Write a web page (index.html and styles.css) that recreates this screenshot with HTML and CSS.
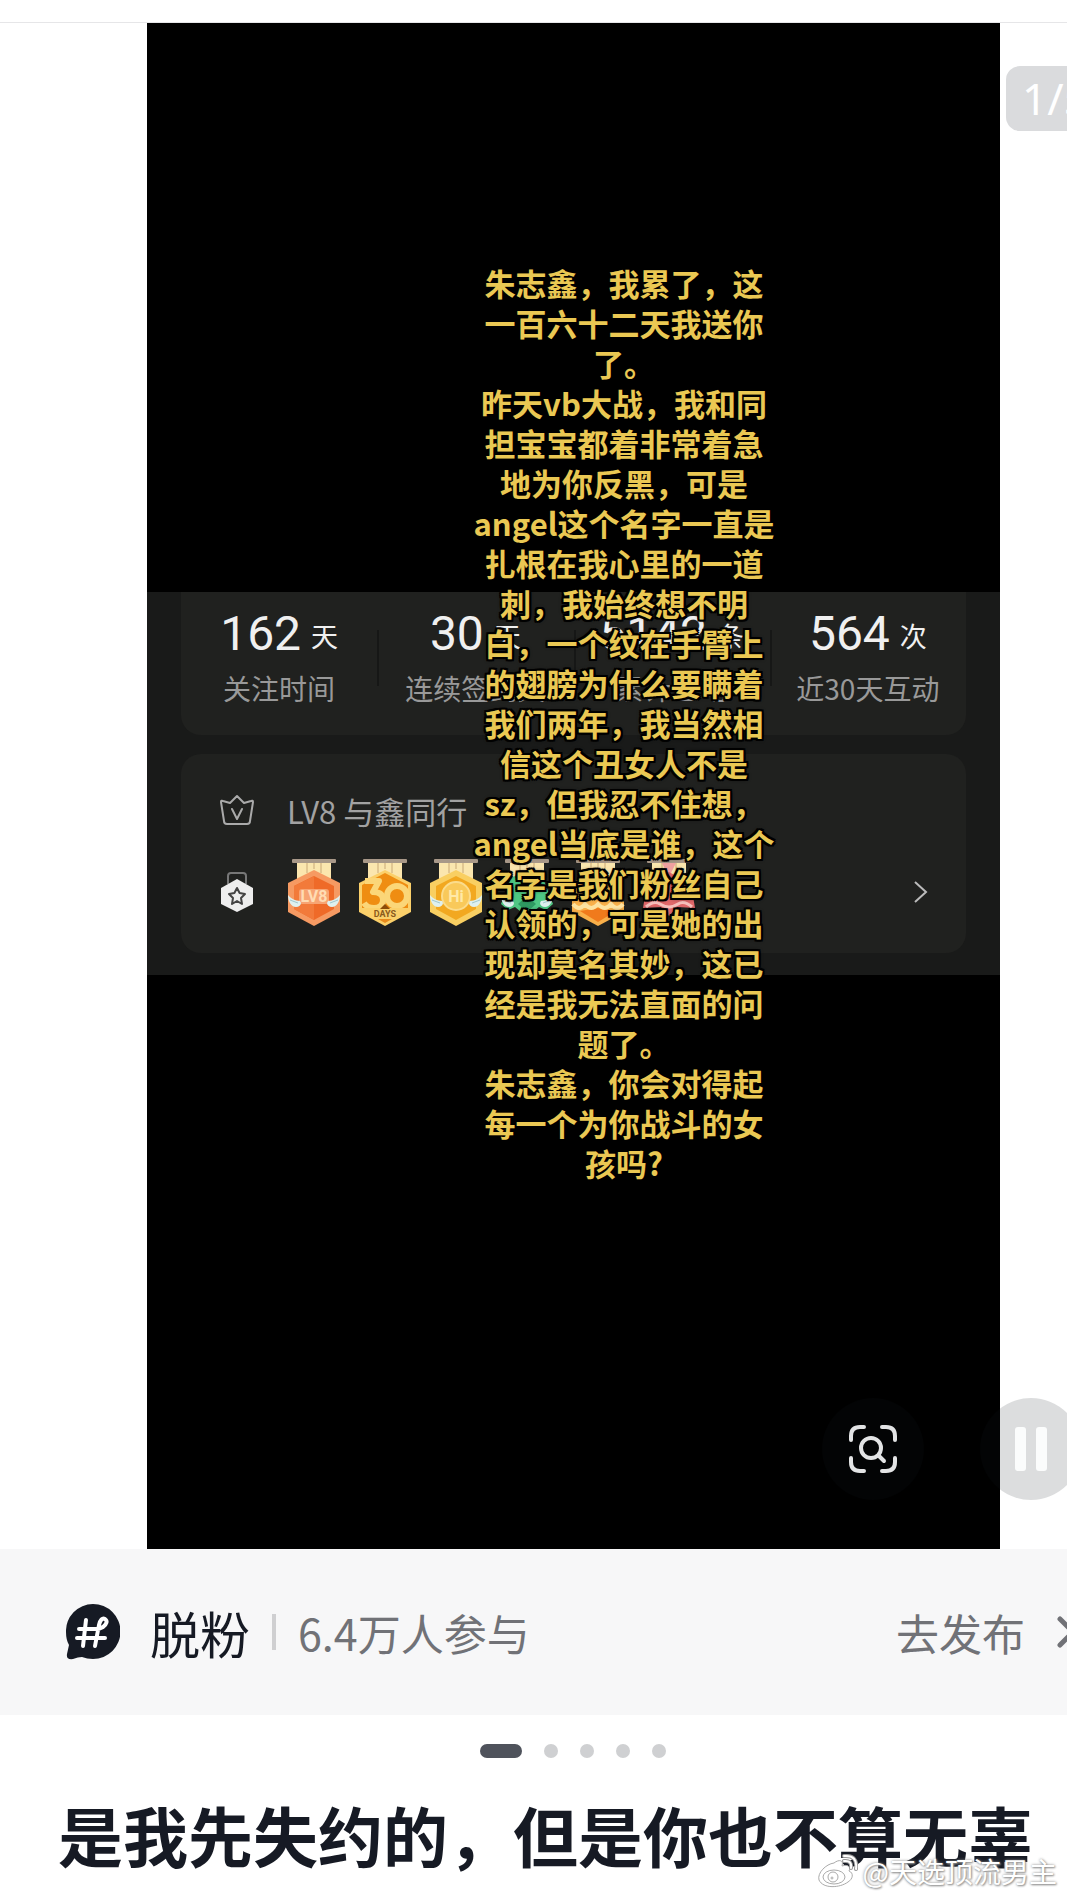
FILE: index.html
```html
<!DOCTYPE html>
<html lang="zh-CN">
<head>
  <meta charset="UTF-8" />
  <meta name="viewport" content="width=device-width, initial-scale=1" />
  <title>脱粉</title>
  <link rel="stylesheet" href="styles.css">
</head>
<body>
  <!-- badge shapes shared by the medal row -->
  <svg class="defs" width="0" height="0" aria-hidden="true">
    <symbol id="ribbon" viewBox="0 0 54 68">
      <path d="M10 3h34v20H10z" fill="#fbe6ae" />
      <path d="M20 3v12M27 3v8M34 3v12" stroke="#c9a877" stroke-width="1" />
      <rect x="5" y="1" width="44" height="4" rx="1" fill="#a89888" />
    </symbol>
    <symbol id="wings" viewBox="0 0 54 68">
      <path d="M13 43c-4 0-10-3-12-6 0 6 3 12 8 12 3 0 5-2 5-4zM41 43c4 0 10-3 12-6 0 6-3 12-8 12-3 0-5-2-5-4z" fill="#dff0ee" />
      <path d="M3 42l8 3M51 42l-8 3" stroke="#9fc8ce" stroke-width="1" />
    </symbol>
  </svg>

  <main class="page">
    <section class="hero">
      <div class="photo">
        <div class="panel">
          <div class="card stats">
            <div class="stat"><p class="num">162<small>天</small></p><p class="name">关注时间</p></div>
            <div class="stat"><p class="num">30<small>天</small></p><p class="name">连续签到天</p></div>
            <div class="stat"><p class="num">5142<small>条</small></p><p class="name">累计互动</p></div>
            <div class="stat"><p class="num">564<small>次</small></p><p class="name">近30天互动</p></div>
          </div>
          <div class="card level">
            <div class="row">
              <svg class="row-icon" viewBox="0 0 36 40" fill="none" stroke="#aaa" stroke-width="2" stroke-linejoin="round" stroke-linecap="round">
                <path d="M2 12q0-2 2-1l7 2 7-7 7 7 7-2q2-1 2 1l-3 19q0 3-3 3H8q-3 0-3-3z" />
                <path d="M13 19l5 10 5-10" />
              </svg>
              <span>LV8 与鑫同行</span>
            </div>
            <div class="row">
              <svg class="row-icon" viewBox="0 0 36 40">
                <path d="M9 12V4q0-3 3-3h12q3 0 3 3v8" fill="none" stroke="#777" stroke-width="2" />
                <path d="M18 7l16 9v16l-16 8-16-8V16z" fill="#eee" />
                <path d="M18 16l2.600 5 5.400 1-4 4 1 6-5-3-5 3 1-6-4-4 5.400-1z" fill="none" stroke="#444" stroke-width="2" stroke-linejoin="round" />
              </svg>
              <div class="badges">
                <svg viewBox="0 0 54 68">
                  <use href="#ribbon" />
                  <path d="M27 12l26 13v29L27 68 1 54V25z" fill="#f69a62" />
                  <path d="M27 18l20 10v23L27 62 7 51V28z" fill="#ef6a28" />
                  <path d="M27 18v44L7 51V28z" fill="#f27a3a" />
                  <rect x="12" y="31" width="30" height="15" rx="3" fill="#f7a473" />
                  <use href="#wings" />
                  <text x="27" y="44" text-anchor="middle" class="badge-text" fill="#ffdcb4">LV8</text>
                </svg>
                <svg viewBox="0 0 54 68">
                  <use href="#ribbon" />
                  <path d="M27 12l26 13v29L27 68 1 54V25z" fill="#fbd06a" />
                  <path d="M27 15l23 12v25L27 65 4 52V27z" fill="#ef8d12" />
                  <path d="M7 23h14l-6 11q10 0 10 8t-9 8q-7 0-10-5" fill="none" stroke="#fbd678" stroke-width="6" stroke-linejoin="round" />
                  <circle cx="39" cy="38" r="10" fill="none" stroke="#fbd678" stroke-width="6" />
                  <path d="M4 50h46v4L27 66 4 54z" fill="#fbd06a" />
                  <path d="M22 51l5-5 5 5z" fill="#8d4d0a" />
                  <text x="27" y="59" text-anchor="middle" class="badge-days" fill="#8a5a1c">DAYS</text>
                  <path d="M20 61h14l-7 4z" fill="#e88a1c" />
                </svg>
                <svg viewBox="0 0 54 68">
                  <use href="#ribbon" />
                  <path d="M27 12l26 13v29L27 68 1 54V25z" fill="#f9cf62" />
                  <path d="M27 18l20 10v23L27 62 7 51V28z" fill="#f2a820" />
                  <circle cx="27" cy="38" r="14" fill="#f9c95a" stroke="#fbdc8c" stroke-width="2" />
                  <use href="#wings" />
                  <text x="27" y="44" text-anchor="middle" class="badge-text" fill="#ffe9a8">Hi</text>
                </svg>
                <svg viewBox="0 0 54 68">
                  <use href="#ribbon" />
                  <path d="M27 12l16 8 10 26-7 6-7-3-12 10-12-10-7 3-7-6 10-26z" fill="#4fc884" />
                  <path d="M18 46l9-8 9 8-9 8z" fill="#2f9a62" />
                  <use href="#wings" />
                </svg>
                <svg viewBox="0 0 54 68">
                  <use href="#ribbon" />
                  <path d="M27 12l26 13v29L27 68 1 54V25z" fill="#f9b04a" />
                  <path d="M27 50l18 3-18 11-18-11z" fill="#f07a1c" />
                  <path d="M2 46q6 8 12 0 6 8 13 0 7 8 13 0 6 8 12 0" fill="none" stroke="#fde2a0" stroke-width="4" />
                </svg>
                <svg viewBox="0 0 54 68">
                  <use href="#ribbon" />
                  <path d="M20 5h14l-7 14z" fill="#f0a0a0" />
                  <path d="M27 14l22 12 4 24-18-1-8 9-8-9-18 1 4-24z" fill="#e0686a" />
                  <path d="M4 49q8-7 14-3 9 6 18 0 6-4 14 3" fill="none" stroke="#f7c0bc" stroke-width="3" />
                </svg>
              </div>
              <svg class="more" viewBox="0 0 14 24" fill="none" stroke="#bbb" stroke-width="2"><path d="M1 2l11 10L1 22" /></svg>
            </div>
          </div>
        </div>
        <p class="caption">
          朱志鑫，我累了，这<br>
          一百六十二天我送你<br>
          了。<br>
          昨天vb大战，我和同<br>
          担宝宝都着非常着急<br>
          地为你反黑，可是<br>
          angel这个名字一直是<br>
          扎根在我心里的一道<br>
          刺，我始终想不明<br>
          白，一个纹在手臂上<br>
          的翅膀为什么要瞒着<br>
          我们两年，我当然相<br>
          信这个丑女人不是<br>
          sz，但我忍不住想，<br>
          angel当底是谁，这个<br>
          名字是我们粉丝自己<br>
          认领的，可是她的出<br>
          现却莫名其妙，这已<br>
          经是我无法直面的问<br>
          题了。<br>
          朱志鑫，你会对得起<br>
          每一个为你战斗的女<br>
          孩吗?
        </p>
      </div>
      <span class="counter">1/5</span>
      <button class="round scan" aria-label="识图">
        <svg width="50" height="50" viewBox="0 0 50 50" fill="none" stroke="#e3e4e5" stroke-width="4" stroke-linecap="round">
          <path d="M3 16v-4q0-9 9-9h4M34 3h4q9 0 9 9v4M47 34v4q0 9-9 9h-4M16 47h-4q-9 0-9-9v-4" />
          <circle cx="23" cy="24" r="10" />
          <path d="M31 32l5 5" />
        </svg>
      </button>
      <button class="round pause" aria-label="暂停">
        <svg width="34" height="44" viewBox="0 0 34 44" fill="#fbfcfc">
          <rect x="1" width="11" height="44" rx="3" />
          <rect x="22" width="11" height="44" rx="3" />
        </svg>
      </button>
    </section>

    <section class="topic">
      <svg class="topic-icon" viewBox="0 0 54 56">
        <path d="M27 0a27 27 0 0 1 0 55q-6 0-11-2-4 0-9 2-7 1-6-5l2-9Q0 36 0 28A27 27 0 0 1 27 0z" fill="#161a24" />
        <path d="M20 16l-3 26M29 42l4-21q2-8 6-6 4 3-2 8-3 2-8 2H13M11 34h28" fill="none" stroke="#fff" stroke-width="4" stroke-linecap="round" stroke-linejoin="round" />
      </svg>
      <a class="topic-name" href="#">脱粉</a>
      <span class="bar"></span>
      <span class="joined">6.4万人参与</span>
      <a class="publish" href="#">去发布
        <svg width="20" height="32" viewBox="0 0 20 32" fill="none" stroke="#717277" stroke-width="5" stroke-linecap="round"><path d="M3 3l13 13L3 29" /></svg>
      </a>
    </section>

    <div class="dots"><i class="on"></i><i></i><i></i><i></i><i></i></div>
    <h1>是我先失约的，但是你也不算无辜</h1>

    <div class="watermark">
      <svg width="40" height="34" viewBox="0 0 40 34" fill="#fff" stroke="#aaa" stroke-width="1">
        <path d="M16 9c5-4 10-3 8 3 6-2 9 1 7 5 5 2 4 8-1 11-8 6-25 7-29-2C-1 19 8 10 16 9z" />
        <ellipse cx="16" cy="23" rx="11" ry="7" />
        <circle cx="15" cy="23" r="5" />
        <circle cx="14" cy="24" r="1" />
        <path d="M26 7q8-1 7 7M26 2q14-1 12 13" fill="none" stroke="#999" stroke-width="4" stroke-linecap="round" />
        <path d="M26 7q8-1 7 7M26 2q14-1 12 13" fill="none" stroke="#fff" stroke-width="2" stroke-linecap="round" />
      </svg>
      <span>@天选顶流男主</span>
    </div>
  </main>
</body>
</html>
```
FILE: styles.css
```css
:root {
  --ink: #161a24;
  --grey: #717277;
  --cjk: "Noto Sans CJK SC", sans-serif;
}
* { box-sizing: border-box; }
body {
  margin: 0;
  background: #fff;
  color: var(--ink);
  font-family: var(--cjk);
}
p, h1 { margin: 0; }
a { color: inherit; text-decoration: none; }
svg { display: block; flex-shrink: 0; }
.defs { position: absolute; }
.page {
  position: relative;
  overflow: hidden;
  padding-top: 22px;
}

/* picture */
.hero {
  position: relative;
  border-top: 1px solid #e6e6e8;
  padding: 0 67px 0 147px;
}
.photo {
  position: relative;
  aspect-ratio: 853 / 1526;
  background: #000;
  padding-top: 569px;
}
.panel {
  background: #191a19;
  padding: 0 34px 22px;
  display: flex;
  flex-direction: column;
  gap: 19px;
}
.card {
  background: #20211f;
  border-radius: 20px;
}
.stats {
  display: grid;
  grid-template-columns: repeat(4, 1fr);
  border-radius: 0 0 20px 20px;
  height: 143px;
  padding-top: 10px;
}
.stat {
  text-align: center;
  white-space: nowrap;
}
.stat + .stat {
  background: linear-gradient(#161716, #161716) 0 28px / 2px 56px no-repeat;
}
.num {
  display: flex;
  justify-content: center;
  align-items: center;
  gap: 10px;
  font-family: Roboto, var(--cjk);
  font-size: 48px;
  font-weight: 400;
  line-height: 60px;
  color: #f0f0f0;
}
.num small {
  font-family: var(--cjk);
  font-size: 27px;
  padding-top: 4px;
}
.name {
  font-size: 28px;
  line-height: 40px;
  margin-top: 2px;
  color: #999;
}
.level {
  height: 199px;
  padding: 26px 38px 0 38px;
}
.row {
  display: flex;
  align-items: center;
  height: 60px;
  font-size: 31px;
  color: #a2a2a2;
}
.row + .row { margin-top: 22px; }
.row-icon {
  width: 36px;
  height: 40px;
  margin-right: 32px;
}
.badges {
  display: flex;
  gap: 17px;
  flex: 1;
}
.badges svg {
  width: 54px;
  height: 68px;
}
.badge-text { font: 700 16px Roboto, sans-serif; }
.badge-days { font: 700 9px Roboto, sans-serif; }
.more {
  width: 14px;
  height: 24px;
}
.caption {
  position: absolute;
  top: 240px;
  left: 301px;
  width: 352px;
  text-align: center;
  font-size: 31px;
  font-weight: 700;
  line-height: 40px;
  color: #eac853;
  text-shadow: 2px 0 #000, -2px 0 #000, 0 2px #000, 0 -2px #000,
    2px 2px #000, -2px 2px #000, 2px -2px #000, -2px -2px #000, 0 0 4px #000;
}

/* floating controls */
.counter {
  position: absolute;
  top: 43px;
  right: -48px;
  width: 109px;
  padding-left: 16px;
  border-radius: 14px;
  background: #dadbdd;
  color: #fff;
  font-family: "Noto Sans", sans-serif;
  font-size: 44px;
  line-height: 65px;
}
.round {
  position: absolute;
  bottom: 49px;
  width: 102px;
  height: 102px;
  padding: 0;
  border: 0;
  border-radius: 50%;
  display: flex;
  align-items: center;
  justify-content: center;
  background: rgba(22, 26, 36, 0.15);
  cursor: pointer;
}
.scan { right: 143px; }
.pause { right: -15px; }

/* topic bar */
.topic {
  display: flex;
  align-items: center;
  height: 166px;
  padding-left: 66px;
  background: #f7f7f8;
  font-size: 43px;
  color: var(--grey);
  white-space: nowrap;
}
.topic-icon {
  width: 54px;
  height: 56px;
}
.topic-name {
  margin-left: 30px;
  font-size: 50px;
  color: var(--ink);
}
.bar {
  width: 4px;
  height: 36px;
  margin: 0 22px;
  background: #cfcfd1;
}
.publish {
  display: flex;
  align-items: center;
  gap: 32px;
  margin-left: auto;
  margin-right: -10px;
}

.dots {
  display: flex;
  justify-content: center;
  gap: 22px;
  padding: 29px 0 0 79px;
}
.dots i {
  width: 14px;
  height: 14px;
  border-radius: 7px;
  background: #cfd0d2;
}
.dots .on {
  width: 42px;
  background: #4f535c;
}
h1 {
  padding: 28px 0 16px 58px;
  font-size: 65px;
  font-weight: 700;
  line-height: 96px;
  white-space: nowrap;
}

.watermark {
  position: absolute;
  right: 10px;
  bottom: 7px;
  display: flex;
  align-items: center;
  gap: 5px;
  font-size: 28px;
  line-height: 40px;
  color: #fff;
  text-shadow: 0 0 3px #888, 1px 1px 2px #999;
}
```
